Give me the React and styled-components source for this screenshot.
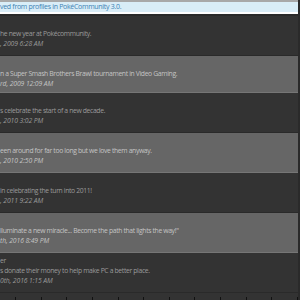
import React from "react";
import styled, { createGlobalStyle } from "styled-components";

const Global = createGlobalStyle`
  html, body { margin: 0; padding: 0; background: #333333; }
  body { width: 300px; height: 300px; overflow: hidden; font-family: "Open Sans", "Liberation Sans", sans-serif; }
`;

const Page = styled.div`
  width: 298px;
  border-right: 2px solid #2a2a2a;
`;

const Notice = styled.div`
  height: 10px;
  border-top: 2px solid #a8a8a8;
  border-bottom: 2px solid #ffffff;
  background: #d9edf7;
  color: #3b82b4;
  font-size: 7px;
  letter-spacing: -0.3px;
  line-height: 10px;
  white-space: nowrap;
  overflow: hidden;
`;

const List = styled.div`
  display: flex;
  flex-direction: column;
  border-top: 2px solid #2a2a2a;
`;

const Row = styled.div`
  height: ${(p) => p.$h}px;
  box-sizing: border-box;
  padding-top: 3px;
  background: ${(p) => (p.$alt ? "#666666" : "#333333")};
  border-bottom: 1px solid ${(p) => (p.$alt ? "#767676" : "#2a2a2a")};
  color: ${(p) => (p.$alt ? "#c4c4c4" : "#9a9a9a")};
  font-size: 6.8px;
  letter-spacing: -0.35px;
  line-height: 10px;
  white-space: nowrap;
  overflow: hidden;
`;

const Line = styled.div`
  height: 10px;
`;

const DateLine = styled.div`
  height: 10px;
  font-style: italic;
  letter-spacing: -0.1px;
`;

const Ticks = styled.div`
  display: flex;
  padding-left: 15px;
  padding-top: 4px;
  gap: 24.7px;
`;

const Tick = styled.span`
  width: 1px;
  height: 3px;
  background: #111111;
`;

const rows = [
  { h: 40, name: "", msg: "he new year at Pokécommunity.", date: ", 2009 6:28 AM" },
  { h: 37, name: "", msg: "n a Super Smash Brothers Brawl tournament in Video Gaming.", date: "rd, 2009 12:09 AM" },
  { h: 40, name: "", msg: "s celebrate the start of a new decade.", date: ", 2010 3:02 PM" },
  { h: 40, name: "", msg: "een around for far too long but we love them anyway.", date: ", 2010 2:50 PM" },
  { h: 40, name: "", msg: " in celebrating the turn into 2011!", date: ", 2011 9:22 AM" },
  { h: 40, name: "", msg: "lluminate a new miracle... Become the path that lights the way!\"", date: "th, 2016 8:49 PM" },
  { h: 40, name: "er", msg: "s donate their money to help make PC a better place.", date: "0th, 2016 1:15 AM" },
];

export default function App() {
  return (
    <>
      <Global />
      <Page>
        <Notice>ved from profiles in PokéCommunity 3.0.</Notice>
        <List>
          {rows.map((r, i) => (
            <Row key={i} $alt={i % 2 === 1} $h={r.h}>
              <Line>{r.name}</Line>
              <Line>{r.msg}</Line>
              <DateLine>{r.date}</DateLine>
            </Row>
          ))}
        </List>
        <Ticks>
          {Array.from({ length: 12 }).map((_, i) => (
            <Tick key={i} />
          ))}
        </Ticks>
      </Page>
    </>
  );
}
